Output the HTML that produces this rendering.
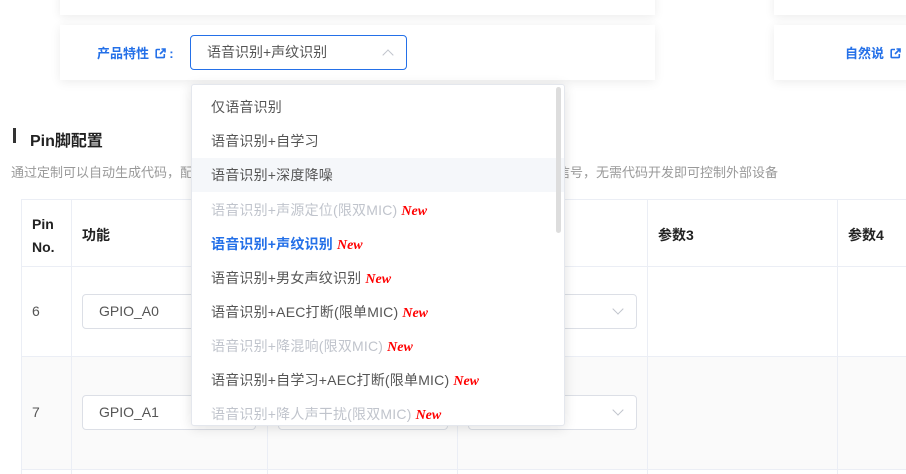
<!DOCTYPE html>
<html><head><meta charset="utf-8"><style>
*{margin:0;padding:0;box-sizing:border-box}
body{width:906px;height:474px;overflow:hidden;background:#fff;font-family:"Liberation Sans","Noto Sans CJK SC",sans-serif;position:relative;color:#333}
.abs{position:absolute}
.card{position:absolute;background:#fff;box-shadow:0 2px 10px rgba(0,0,0,.08)}
.blue{color:#2470e8}
.sel{position:absolute;border:1px solid #dcdfe6;border-radius:4px;background:#fff;height:35px;font-size:14px;color:#555;padding-left:16px;line-height:33px}
.chev{position:absolute;right:14px;top:10px;width:8px;height:8px;border-right:1px solid #c0c4cc;border-bottom:1px solid #c0c4cc;transform:rotate(45deg)}
.vl{position:absolute;top:199px;bottom:0;width:1px;background:#ebeef5}
.hl{position:absolute;left:21px;right:0;height:1px;background:#ebeef5}
.th{position:absolute;font-weight:bold;font-size:14px;color:#222}
.dd{position:absolute;left:191px;top:84px;width:374px;height:342px;background:#fff;border:1px solid #e4e7ed;border-radius:3px;box-shadow:0 2px 12px rgba(0,0,0,.12)}
.it{position:absolute;left:0;right:0;height:34px;line-height:34px;padding-left:19px;font-size:14px;color:#555;letter-spacing:.2px}
.it.d{color:#c0c4cc}
.new{font-family:"Liberation Serif",serif;font-style:italic;font-weight:bold;color:#f00;font-size:14px;margin-left:4px;letter-spacing:0}
</style></head><body>
<div class="card" style="left:60px;top:-10px;width:595px;height:25px"></div>
<div class="card" style="left:774px;top:-10px;width:140px;height:25px"></div>
<div class="card" style="left:60px;top:25px;width:595px;height:55px"></div>
<div class="card" style="left:774px;top:25px;width:140px;height:55px"></div>
<div class="abs blue" style="left:97px;top:43px;font-size:13px;font-weight:bold">产品特性
<svg width="11" height="11" viewBox="0 0 11 11" style="vertical-align:-1px;margin-left:2px"><path d="M5 1.5H2a.8.8 0 0 0-.8.8v6.5a.8.8 0 0 0 .8.8h6.5a.8.8 0 0 0 .8-.8V6" stroke="#2470e8" stroke-width="1.6" fill="none"/><path d="M6.5 1H10V4.5M10 1L5 6" stroke="#2470e8" stroke-width="1.6" fill="none"/></svg> :</div>
<div class="abs blue" style="left:845px;top:43px;font-size:13px;font-weight:bold">自然说
<svg width="11" height="11" viewBox="0 0 11 11" style="vertical-align:-1px;margin-left:2px"><path d="M5 1.5H2a.8.8 0 0 0-.8.8v6.5a.8.8 0 0 0 .8.8h6.5a.8.8 0 0 0 .8-.8V6" stroke="#2470e8" stroke-width="1.6" fill="none"/><path d="M6.5 1H10V4.5M10 1L5 6" stroke="#2470e8" stroke-width="1.6" fill="none"/></svg></div>
<div class="sel" style="left:190px;top:35px;width:217px;border-color:#2470e8">语音识别+声纹识别<div class="chev" style="top:15px;transform:rotate(225deg)"></div></div>

<div class="abs" style="left:13px;top:128px;width:3px;height:15px;background:#333"></div>
<div class="abs" style="left:30px;top:127px;font-size:16px;font-weight:bold;color:#222">Pin脚配置</div>
<div class="abs" style="left:11px;top:162px;font-size:13px;color:#999;white-space:nowrap">通过定制可以自动生成代码，配置引脚的功能和参数后，可以通过识别语音输出对应的控制电平信号，无需代码开发即可控制外部设备</div>

<div class="abs" style="left:21px;top:356px;right:0;height:113px;background:#fafafa"></div>
<div class="hl" style="top:199px"></div><div class="hl" style="top:266px"></div><div class="hl" style="top:356px"></div><div class="hl" style="top:469px"></div>
<div class="vl" style="left:21px"></div><div class="vl" style="left:71px"></div><div class="vl" style="left:267px"></div><div class="vl" style="left:457px"></div><div class="vl" style="left:647px"></div><div class="vl" style="left:837px"></div>
<div class="th" style="left:32px;top:213px;line-height:23px">Pin<br>No.</div>
<div class="th" style="left:82px;top:225px">功能</div>
<div class="th" style="left:658px;top:225px">参数3</div>
<div class="th" style="left:848px;top:225px">参数4</div>
<div class="abs" style="left:32px;top:303px;font-size:14px;color:#555">6</div>
<div class="abs" style="left:32px;top:404px;font-size:14px;color:#555">7</div>
<div class="sel" style="left:82px;top:294px;width:174px">GPIO_A0</div>
<div class="sel" style="left:278px;top:294px;width:170px"></div>
<div class="sel" style="left:468px;top:294px;width:169px"><div class="chev"></div></div>
<div class="sel" style="left:82px;top:395px;width:174px">GPIO_A1</div>
<div class="sel" style="left:278px;top:395px;width:170px"></div>
<div class="sel" style="left:468px;top:395px;width:169px"><div class="chev"></div></div>

<div class="dd">
<div class="abs" style="left:364px;top:2px;width:5px;height:146px;background:#ddd;border-radius:3px;z-index:2"></div>
<div class="it" style="top:5px">仅语音识别</div>
<div class="it" style="top:39px">语音识别+自学习</div>
<div class="it" style="top:73px;background:#f5f7fa">语音识别+深度降噪</div>
<div class="it d" style="top:108px">语音识别+声源定位(限双MIC)<span class="new">New</span></div>
<div class="it" style="top:142px;color:#2470e8;font-weight:bold">语音识别+声纹识别<span class="new">New</span></div>
<div class="it" style="top:176px">语音识别+男女声纹识别<span class="new">New</span></div>
<div class="it" style="top:210px">语音识别+AEC打断(限单MIC)<span class="new">New</span></div>
<div class="it d" style="top:244px">语音识别+降混响(限双MIC)<span class="new">New</span></div>
<div class="it" style="top:278px">语音识别+自学习+AEC打断(限单MIC)<span class="new">New</span></div>
<div class="it d" style="top:312px;height:28px;overflow:hidden">语音识别+降人声干扰(限双MIC)<span class="new">New</span></div>
</div>
</body></html>
